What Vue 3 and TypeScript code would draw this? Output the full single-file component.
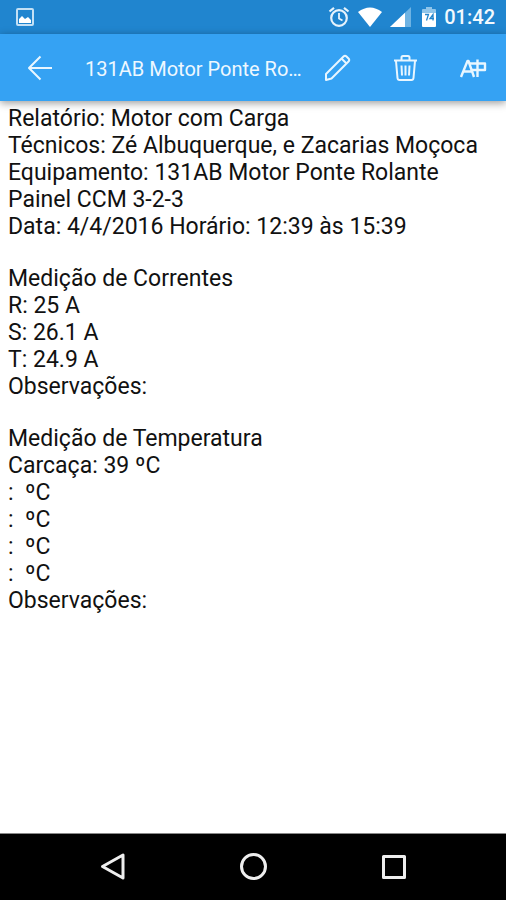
<script setup lang="ts">
interface Section {
  id: string
  lines: string[]
}

const title = '131AB Motor Ponte Ro…'
const time = '01:42'

const sections: Section[] = [
  {
    id: 'relatorio',
    lines: [
      'Relatório: Motor com Carga',
      'Técnicos: Zé Albuquerque, e Zacarias Moçoca',
      'Equipamento: 131AB Motor Ponte Rolante',
      'Painel CCM 3-2-3',
      'Data: 4/4/2016 Horário: 12:39 às 15:39',
    ],
  },
  {
    id: 'correntes',
    lines: ['Medição de Correntes', 'R: 25 A', 'S: 26.1 A', 'T: 24.9 A', 'Observações:'],
  },
  {
    id: 'temperatura',
    lines: [
      'Medição de Temperatura',
      'Carcaça: 39 ºC',
      ':  ºC',
      ':  ºC',
      ':  ºC',
      ':  ºC',
      'Observações:',
    ],
  },
]
</script>

<template>
  <div class="screen">
    <div class="status">
      <svg class="picture" width="18" height="18" viewBox="0 0 18 18" aria-hidden="true">
        <rect x="1" y="1" width="16" height="16" rx="1" fill="none" stroke="#c3e0f5" stroke-width="2" />
        <path d="M3 15V11L6 8L9 11L12 9L15 12V15Z" fill="#fff" />
      </svg>
      <div class="indicators">
        <svg width="22" height="22" viewBox="0 0 22 22" fill="none" stroke="#e6f3fc" aria-hidden="true">
          <circle cx="11" cy="12" r="7.800" stroke-width="2.200" />
          <path d="M1.500 5.500L6 1.800M20.500 5.500L16 1.800" stroke-width="2.200" />
          <path d="M11 7V12.500L14.500 14.500" stroke-width="1.800" />
        </svg>
        <svg width="24" height="20" viewBox="0 0 24 20" aria-hidden="true">
          <path d="M0 5Q12 -4 24 5L12 20Z" fill="#fff" />
        </svg>
        <svg width="21" height="20" viewBox="0 0 21 20" aria-hidden="true">
          <path d="M0 20L21 0V20Z" fill="#6eb3e3" />
          <path d="M0 20L15 5.700V20Z" fill="#fff" />
        </svg>
        <svg class="battery" width="14" height="20" viewBox="0 0 14 20" aria-hidden="true">
          <path d="M4 0H10V2H13Q14 2 14 3V7H0V3Q0 2 1 2H4Z" fill="#8fc5ea" />
          <path d="M0 6H14V19Q14 20 13 20H1Q0 20 0 19Z" fill="#fff" />
          <path d="M3 7.500H6.500L4.500 13.500M11 13.500V7.500L8 11.500H12" fill="none" stroke="#2384cb" stroke-width="1.300" />
        </svg>
        <span class="time">{{ time }}</span>
      </div>
    </div>

    <header class="toolbar">
      <button class="back" type="button" aria-label="Voltar">
        <svg width="26" height="26" viewBox="0 0 26 26" aria-hidden="true">
          <path d="M13.500 1.500L2 13L13.500 24.500M2 13H25" />
        </svg>
      </button>
      <h1 class="title">{{ title }}</h1>
      <button class="action" type="button" aria-label="Editar">
        <svg width="28" height="28" viewBox="0 0 28 28" aria-hidden="true">
          <path d="M3 20L20.500 2.500Q22 1 23.500 2.500L25.500 4.500Q27 6 25.500 7.500L8.500 24.500L3 26Z" />
          <path d="M18.500 4.500L23.500 9.500" />
        </svg>
      </button>
      <button class="action" type="button" aria-label="Excluir">
        <svg width="28" height="28" viewBox="0 0 28 28" aria-hidden="true">
          <path d="M3 6.500H26M10.500 6V3.500Q10.500 2 12 2H17Q18.500 2 18.500 3.500V6M5 7L6.500 24Q6.700 26 8.500 26H20.500Q22.300 26 22.500 24L24 7" />
          <path d="M10.500 11.500L11 21.500M14.500 11.500V21.500M18.500 11.500L18 21.500" />
        </svg>
      </button>
      <button class="action" type="button" aria-label="Tamanho do texto">
        <svg class="bold" width="28" height="28" viewBox="0 0 28 28" aria-hidden="true">
          <path d="M2 23L8.500 7H9.500L15 23M4.500 17.500H12.500" />
          <path d="M10.500 9.500H26V16H12.500M18.500 5.500V23" />
        </svg>
      </button>
    </header>

    <main class="report">
      <section v-for="section in sections" :key="section.id">
        <p v-for="(line, i) in section.lines" :key="i">{{ line }}</p>
      </section>
    </main>

    <nav class="system">
      <button type="button" aria-label="Voltar ao anterior">
        <svg width="30" height="30" viewBox="0 0 30 30" aria-hidden="true">
          <path d="M25 3V26L4.500 14.500Z" />
        </svg>
      </button>
      <button type="button" aria-label="Início">
        <svg width="30" height="30" viewBox="0 0 30 30" aria-hidden="true">
          <circle cx="15.500" cy="14.500" r="12" />
        </svg>
      </button>
      <button type="button" aria-label="Recentes">
        <svg width="30" height="30" viewBox="0 0 30 30" aria-hidden="true">
          <rect x="5.500" y="4.500" width="21" height="21" />
        </svg>
      </button>
    </nav>
  </div>
</template>

<style>
body {
  margin: 0;
  background: #fff;
}
</style>

<style scoped>
.screen {
  display: flex;
  flex-direction: column;
  min-height: 100vh;
  background: #fff;
  font-family: Roboto, 'Liberation Sans', sans-serif;
}

.status {
  display: flex;
  align-items: center;
  justify-content: space-between;
  height: 34px;
  padding: 0 11px 0 16px;
  background: #2085cf;
}

.indicators {
  display: flex;
  align-items: center;
  gap: 8px;
}

.battery {
  margin-left: 3px;
}

.time {
  color: #f2f9fe;
  font-size: 20px;
  font-weight: 500;
  line-height: 36px;
}

button {
  display: flex;
  align-items: center;
  justify-content: center;
  margin: 0;
  padding: 0;
  border: 0;
  background: none;
  cursor: pointer;
}

.toolbar {
  display: flex;
  position: relative;
  height: 67px;
  background: #35a2f3;
  box-shadow: 0 2px 8px rgba(0, 0, 0, 0.4);
}

.toolbar svg {
  fill: none;
  stroke: #e8f6ff;
  stroke-width: 2;
  stroke-linejoin: round;
}

.toolbar .bold {
  stroke-width: 2.4;
}

.back {
  flex: 0 0 80px;
}

.action {
  flex: 0 0 68px;
  padding-left: 2px;
}

.title {
  flex: 1;
  min-width: 0;
  margin: 0;
  padding-left: 5px;
  color: #eef8ff;
  font-size: 20px;
  font-weight: 400;
  line-height: 70px;
  white-space: nowrap;
}

.report {
  display: flex;
  flex: 1;
  flex-direction: column;
  gap: 25px;
  padding: 4px 8px;
  color: #111;
  font-size: 23px;
  line-height: 27px;
}

.report p {
  margin: 0;
  white-space: pre-wrap;
}

.system {
  display: grid;
  grid-template-columns: repeat(3, 140px);
  justify-content: center;
  height: 66px;
  border-top: 1px solid #888;
  background: #000;
}

.system svg {
  fill: none;
  stroke: #eee;
  stroke-width: 3;
  stroke-linejoin: round;
}
</style>
